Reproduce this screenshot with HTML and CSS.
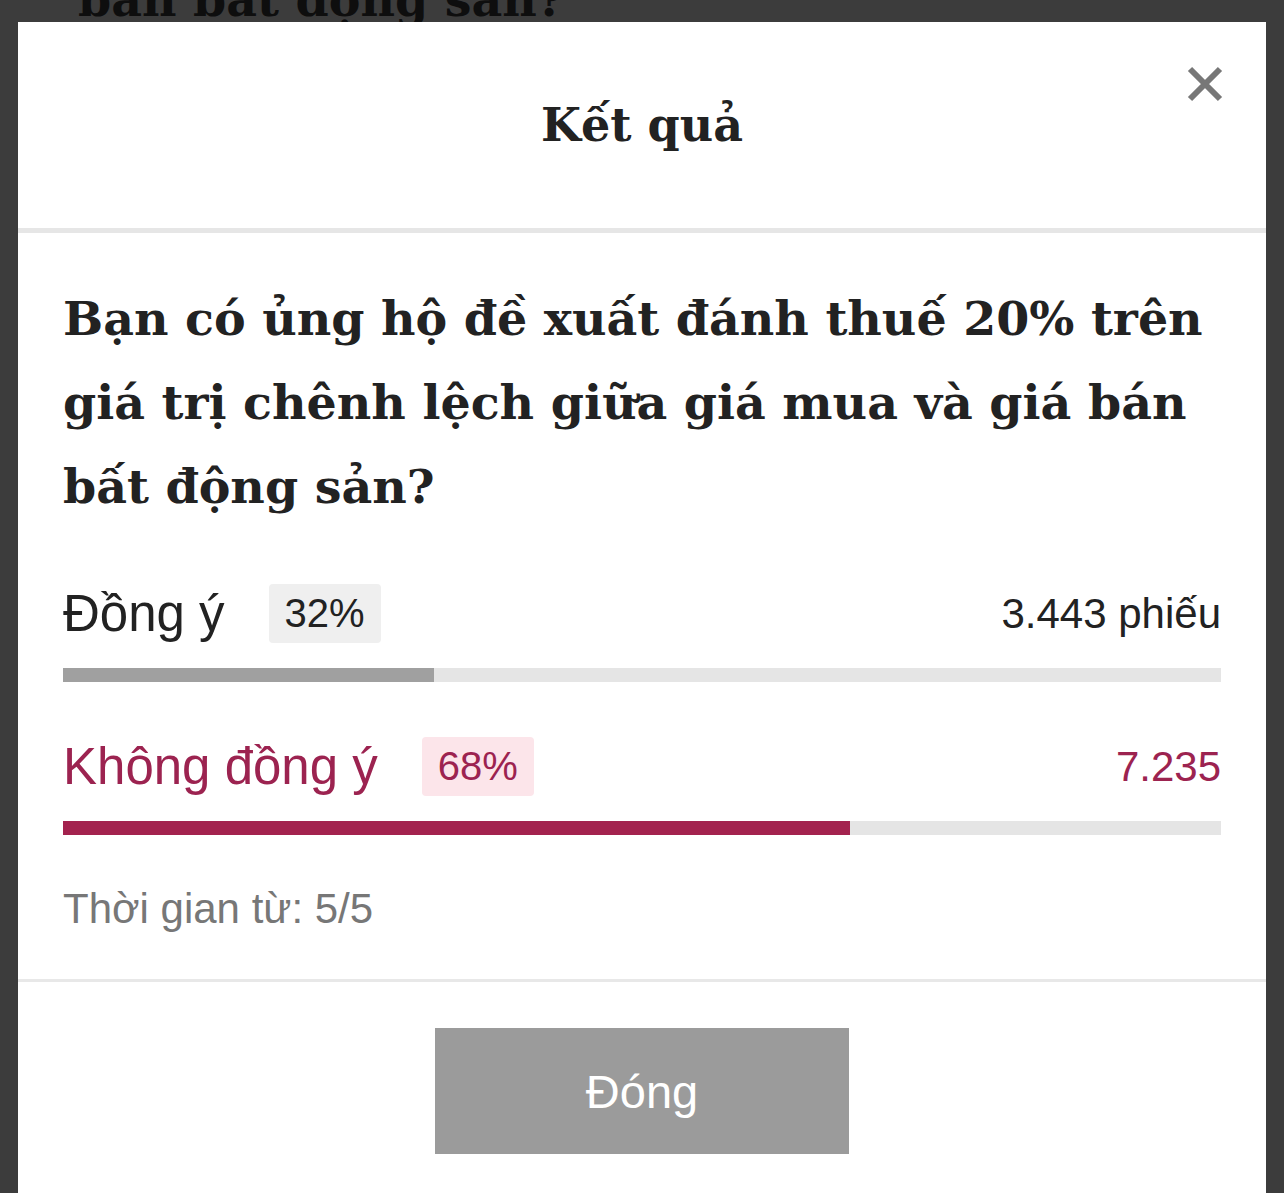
FILE: index.html
```html
<!DOCTYPE html>
<html lang="vi">
<head>
  <meta charset="UTF-8">
  <meta name="viewport" content="width=device-width, initial-scale=1.0">
  <title>Kết quả</title>
  <link rel="stylesheet" href="styles.css">
</head>
<body>
  <p class="behind">bán bất động sản?</p>
  <div class="modal">
    <header class="modal-header">
      <h1>Kết quả</h1>
      <button class="close" aria-label="Đóng">
        <svg width="36" height="36" viewBox="0 0 36 36">
          <path d="M3 3 L33 33 M33 3 L3 33" stroke="#777" stroke-width="6" fill="none"/>
        </svg>
      </button>
    </header>
    <section class="modal-body">
      <h2 class="question">Bạn có ủng hộ đề xuất đánh thuế 20% trên giá trị chênh lệch giữa giá mua và giá bán bất động sản?</h2>
      <div class="option">
        <div class="option-row">
          <span class="label">Đồng ý</span>
          <span class="badge">32%</span>
          <span class="count">3.443 phiếu</span>
        </div>
        <div class="bar"><div class="fill" style="width: 32%"></div></div>
      </div>
      <div class="option option-top">
        <div class="option-row">
          <span class="label">Không đồng ý</span>
          <span class="badge">68%</span>
          <span class="count">7.235</span>
        </div>
        <div class="bar"><div class="fill" style="width: 68%"></div></div>
      </div>
      <p class="since">Thời gian từ: 5/5</p>
    </section>
    <footer class="modal-footer">
      <button class="btn-close">Đóng</button>
    </footer>
  </div>
</body>
</html>
```

FILE: styles.css
```css
body {
  margin: 0;
  padding: 0;
  background-color: #3c3c3c;
  font-family: "Liberation Sans", Arial, sans-serif;
  overflow: hidden;
}
.behind {
  margin: -30px 0 0 78px;
  height: 52px;
  font-family: "DejaVu Serif", serif;
  font-weight: bold;
  font-size: 47.5px;
  line-height: 58px;
  color: #0e0e0e;
}
.modal {
  position: relative;
  margin: 0 18px;
  background: #fff;
  height: 1200px;
}
.modal-header {
  height: 206px;
  display: flex;
  align-items: center;
  justify-content: center;
  border-bottom: 5px solid #e6e6e6;
  position: relative;
}
.modal-header h1 {
  margin: 0;
  font-family: "DejaVu Serif", serif;
  font-weight: bold;
  font-size: 46px;
  color: #222;
}
.close {
  position: absolute;
  top: 44px;
  right: 43px;
  width: 36px;
  height: 36px;
  padding: 0;
  border: none;
  background: none;
}
.close svg {
  display: block;
}
.modal-body {
  padding: 43px 45px 45px;
  border-bottom: 3px solid #e8e8e8;
}
.question {
  margin: 0 0 56px;
  font-family: "DejaVu Serif", serif;
  font-weight: bold;
  font-size: 47.5px;
  line-height: 84px;
  color: #222;
}
.option-top {
  margin-top: 55px;
}
.option-row {
  display: flex;
  align-items: center;
  height: 59px;
}
.label {
  font-size: 51px;
  color: #222;
}
.badge {
  margin-left: 44px;
  padding: 0 16px;
  height: 59px;
  line-height: 59px;
  border-radius: 4px;
  background: #efefef;
  font-size: 40px;
  color: #222;
}
.count {
  margin-left: auto;
  font-size: 42px;
  color: #222;
}
.bar {
  margin-top: 25px;
  height: 14px;
  background: #e5e5e5;
}
.fill {
  height: 100%;
  background: #a0a0a0;
}
.option-top .label,
.option-top .count,
.option-top .badge {
  color: #9c2350;
}
.option-top .badge {
  background: #fce5ea;
}
.option-top .fill {
  background: #a3224e;
}
.since {
  margin: 49px 0 0;
  font-size: 42px;
  line-height: 50px;
  color: #777;
}
.modal-footer {
  display: flex;
  justify-content: center;
  padding-top: 46px;
}
.btn-close {
  width: 414px;
  height: 126px;
  border: none;
  background: #9b9b9b;
  color: #fff;
  font-family: "Liberation Sans", Arial, sans-serif;
  font-size: 47px;
}
```
